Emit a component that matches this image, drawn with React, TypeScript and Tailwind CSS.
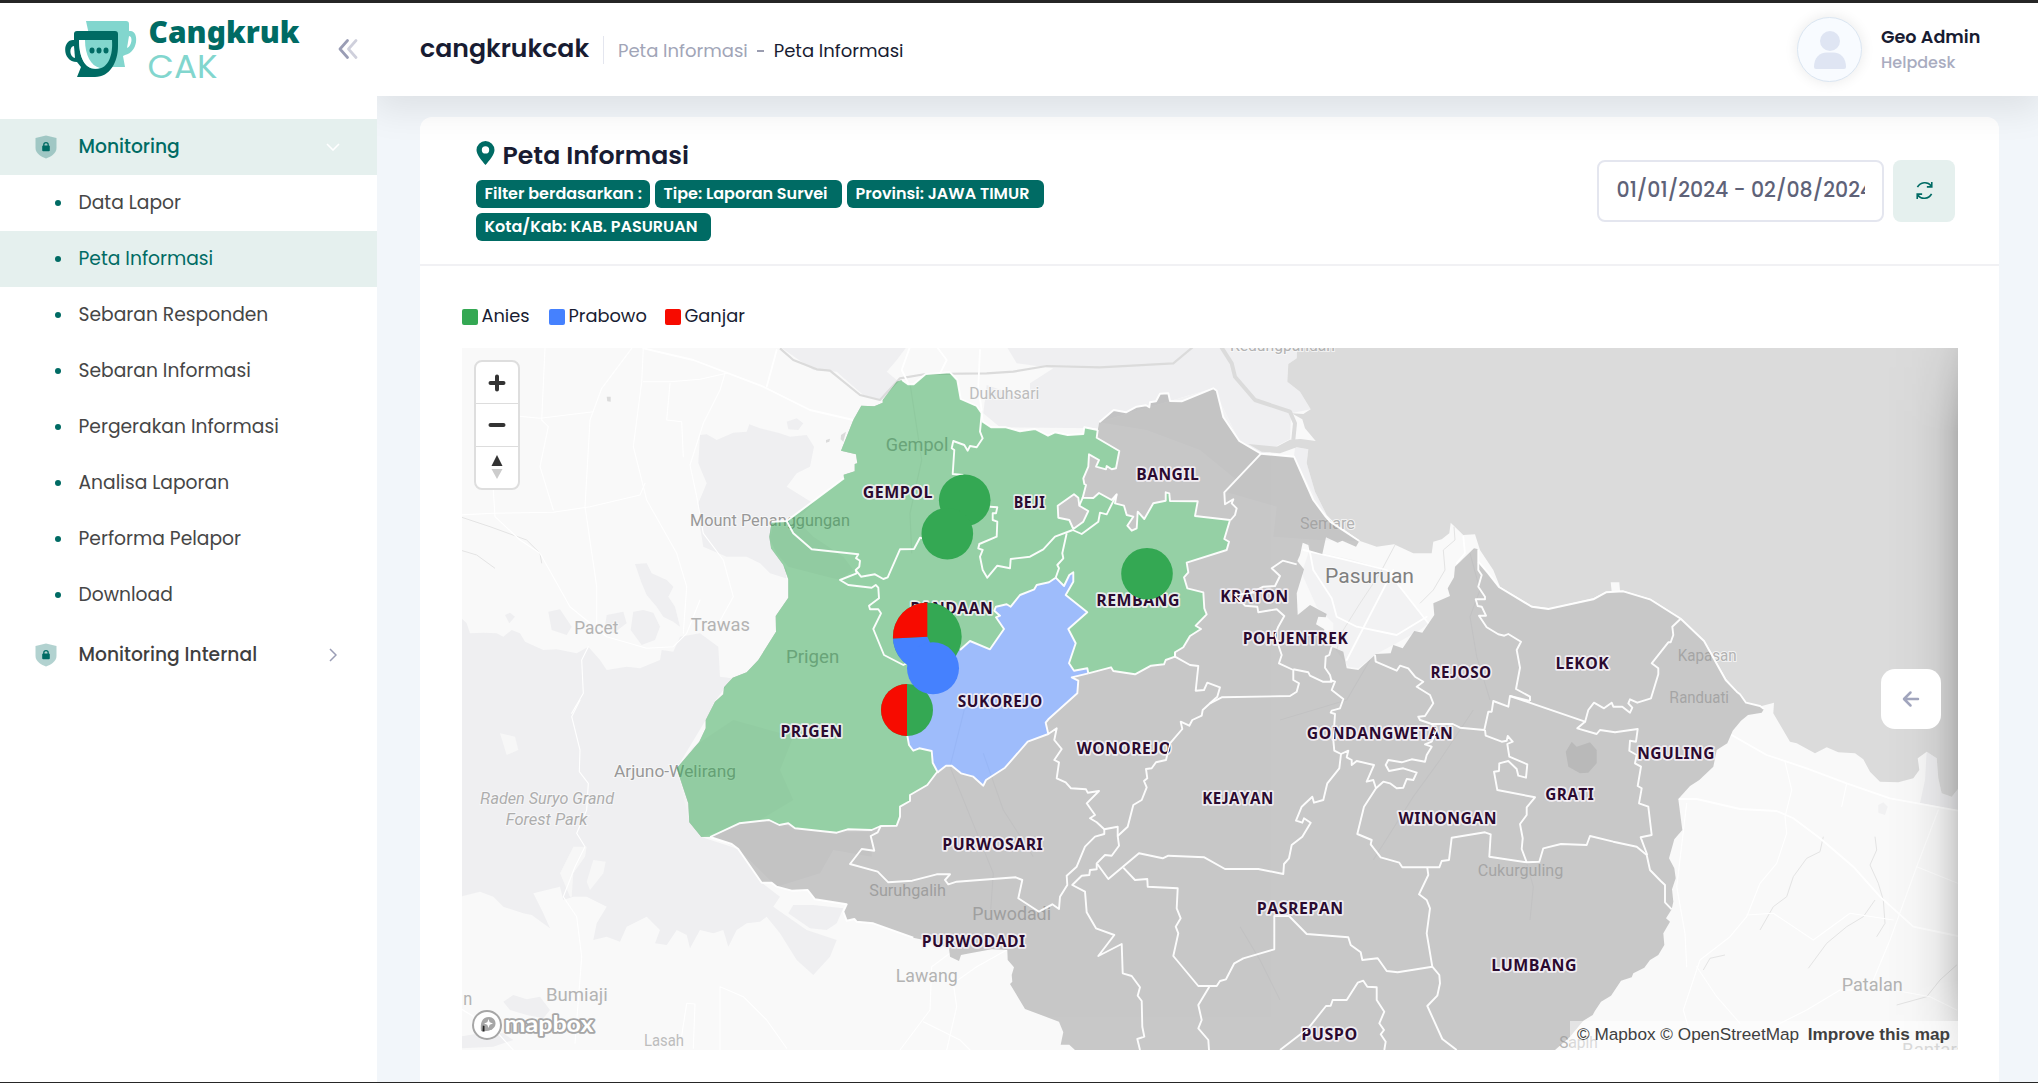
import React from "react";

type Pt = [number, number];

/* Survey tiles are digitised at three units per pixel from each tile's origin. */
const at = (ox: number, oy: number, data: string): Pt[] => {
  const n = data.trim().split(/\s+/).map(Number);
  const out: Pt[] = [];
  for (let i = 0; i < n.length; i += 2) out.push([ox + n[i] / 3, oy + n[i + 1] / 3]);
  return out;
};
const A = (d: string) => at(460, 340, d);
const B = (d: string) => at(800, 340, d);
const C = (d: string) => at(1180, 340, d);
const D = (d: string) => at(1560, 340, d);
const E = (d: string) => at(460, 700, d);
const F = (d: string) => at(860, 700, d);
const G = (d: string) => at(1240, 700, d);
const H = (d: string) => at(1540, 700, d);

const line = (...parts: Pt[][]) =>
  "M" + parts.flat().map((p) => p[0].toFixed(1) + " " + p[1].toFixed(1)).join("L");
const area = (...parts: Pt[][]) => line(...parts) + "Z";

const westCoast = [
  ...E("745 410 724 411 688 367 685 310 650 205 718 125 737 85 737 60 768 0"),
  ...A("738 1138 765 1085 790 1063 792 1042 818 1013 860 997 895 960 948 875 947 828 985 773 985 718 970 675 933 625 928 590 935 545 980 543 1152 415 1151 404 1184 394 1184 372 1192 370 1188 343 1143 332 1180 240 1204 197 1243 199 1268 188 1268 180 1310 125 1326 120 1344 133 1361 133 1397 102"),
  ...B("450 97 472 120 482 177 530 198 545 220 548 245 573 262 618 262 660 274 705 267 744 287 765 277 803 285 850 282 853 262 893 270"),
];
const bangilNorth = B("898 247 941 210 978 217 1010 200 1038 196 1048 202 1050 187 1068 184 1080 161 1105 160 1110 183 1145 184 1240 145 1250 152 1270 232 1318 303 1383 341");
const cityEdge = C("342 350 400 480 437 530 450 545 538 603 528 620 487 602 473 608 438 592 427 642 388 631 385 615 368 608 360 645 352 663 372 688 350 760 353 825 390 795 440 822 437 832 415 830 408 853 433 868 430 885 455 920 490 935 500 985 535 990 588 942 632 940 640 915 668 925 703 873 727 878 763 825 760 790 810 768 803 745 822 712 825 680 882 625 895 628");
const lekokCoast = [
  ...C("895 665 925 700 958 742 1055 800 1105 807 1240 778 1278 757 1330 754"),
  ...D("272 779 362 836 432 903 497 1020 530 1055 540 1063 558 1088 600 1098 612 1107"),
];
const eastEdge = H("665 38 624 45 603 62 578 92 562 130 530 150 520 200 478 240 450 258 415 297 427 390 403 418 387 475 403 505 407 535 396 568 400 605 395 628 378 655 390 665 370 700 373 735 355 765 330 780 313 803 280 820 275 832 243 842 213 887 183 905 165 932 158 945 130 962 90 1010 45 1050");
const southEdge = [
  ...F("645 1050 628 1034 602 1034 610 997 597 965 495 927 450 852 457 845 455 825 462 802 443 780 442 750 395 748 330 760 303 765 297 783 270 770 267 745 215 725 160 713"),
  ...E("1240 670 1190 665 1183 657 1160 662 1150 635 1160 613 1065 598 1043 570 995 572 950 560 935 548 905 548 835 447 815 432 750 411"),
];

const bejiEast = B("893 270 890 293 958 333 948 385 935 388 920 378 918 388 888 380 897 360 867 343 865 380 850 415 853 432 858 435 848 473 880 474 897 459 935 480 950 463 945 490");
const rembang = B("972 497 980 525 1000 530 982 557 995 572 1010 565 1013 515 1033 537 1060 490 1097 482 1097 457 1108 460 1110 483 1193 484 1185 528 1290 540 1273 597 1287 605 1280 630 1160 668 1165 697 1152 712 1162 745 1210 757 1213 805 1220 823 1187 857 1203 867 1170 888 1150 922 1125 937 1125 950 1097 960 1092 973 1053 977 1005 1003 940 993 933 982 865 1000");
const rembangWest = B("865 1000 862 985 822 992 807 970 827 910 805 867 862 817 797 765 820 725 820 697 808 705 792 738 767 713");
const sukorejoNorth = B("767 713 747 727 710 735 703 748 660 765 632 800 620 793 588 800 583 812 600 827 588 832 612 867 570 928 510 903 480 930");
const sukorejoWest: Pt[] = [[935, 665], [918, 690], ...F("142 107 147 135 160 152 178 145 215 153 218 188 233 217")];
const prigenSouth = E("1432 215 1402 255 1350 285 1350 303 1320 320 1320 350 1310 377 1262 378 1235 390 1163 388 1130 398 1005 385 985 370 958 375 927 360 838 370 750 411");
const sukorejoEast = B("865 1000 815 1012 835 1022 832 1060 745 1138");
const sukorejoSouth = F("557 68 565 102 503 125 435 203 378 240 370 257 340 230 303 220 275 197 258 197 233 217");
const enclave = B("822 463 835 473 838 497 865 513 850 545 820 567 808 540 775 533 773 497");

const regency = area(westCoast, bangilNorth, cityEdge, lekokCoast, eastEdge, southEdge);
const green = area(westCoast, bejiEast, rembang, rembangWest, sukorejoNorth, sukorejoWest, prigenSouth);
const blue = area(sukorejoNorth, sukorejoWest, [...sukorejoSouth].reverse(), [...sukorejoEast].reverse(), rembangWest);

const borders = [
  line(westCoast.slice(38)),
  line(A("935 545 980 543 1152 415")),
  line(bangilNorth, cityEdge.slice(0, 5)),
  line(lekokCoast),
  line(southEdge.slice(19)),
  line(bejiEast, rembang),
  line(rembangWest),
  line(sukorejoNorth),
  line(sukorejoWest, prigenSouth),
  line(sukorejoEast, sukorejoSouth),
  area(enclave),
  line(B("838 497 848 473")),
  line(B("950 463 920 523 900 518 895 545 845 582 818 570")),
  line(A("980 543 1000 580 1055 628 1195 643 1188 655 1200 662 1198 680 1187 690 1203 710 1245 703 1270 717 1283 712 1320 628 1362 627 1380 593 1395 597")),
  line(A("1187 690 1190 700 1140 720 1165 735 1235 743 1247 735 1255 743 1257 775 1227 797 1230 808 1255 808 1263 820 1240 867 1272 945 1330 975 1345 968")),
  line(B("545 220 540 275 548 295 530 322 510 318 503 332 493 315 460 303 455 325 463 330 458 402 490 405")),
  line(B("570 500 592 502 588 520 578 520 578 540 592 545 590 590 538 612 535 625 548 630 540 650 548 690 562 713 592 677 630 685 632 657 690 650 730 628 765 590 818 570")),
  line(B("800 580 787 640 790 655 772 675 777 685 767 713")),
  line(C("243 341 133 457 135 493 160 478 155 490 170 505 165 525 152 540")),
  line(C("350 673 308 662 275 685 300 708 285 738 250 740 210 760 165 765 195 797 232 800 235 817 290 808 313 828 295 860 285 885 300 930 305 945 297 970 340 990 340 1020 357 1030 350 1055 330 1068 125 1072 90 1090")),
  line(C("-15 937 -15 950 30 975 55 978 47 1052 72 1050 82 1028 120 1042 112 1070 90 1090"), F("1055 5 1028 30 1025 47 997 60 988 77 962 65 967 87 930 130 918 180 888 187 875 205 858 207 862 235 852 243 860 262 845 300 820 315 803 380 773 408")),
  line(C("455 920 448 945 437 950 435 983 450 1005 455 1025 428 1025 390 1007 385 997 340 988")),
  line(C("450 1020 465 1025 455 1050 490 1077 480 1105 455 1112"), G("272 38 285 42 280 120 283 152 303 162 298 205 262 250 250 300 222 308 217 290 185 320 168 362 187 368 192 355 212 368 187 410 155 435 147 475 132 492 130 522"), F("1195 507 1095 507 1033 472 925 467 908 475 837 460 745 537 712 492")),
  line(G("303 162 325 152 320 172 335 180 335 195 350 183 402 195 380 245 400 240 408 265 372 320 352 402 395 420 392 433 422 472 478 488 487 502 598 502 605 483 627 480 635 413 735 397 752 403 748 470 860 487 898 485 910 445 963 432 1040 435 1050 408 1120 425 1190 440 1220 465 1230 510"), H("362 543 375 555 375 607 395 628")),
  line(G("408 265 430 245 450 250 470 265 490 263 500 237 520 240 530 218 490 205 447 213 437 195 445 180 485 187 515 178 555 185 560 165 575 140 555 133 575 125 590 90 575 72 540 60 535 50 555 48 580 10"), C("750 1065 710 1040 730 1025 705 1010 685 985 660 977 650 992 587 965 585 945")),
  line(G("575 72 638 72 660 83 733 90 745 35 755 35"), C("940 1083 985 1100 990 1068 1050 1083")),
  line(C("895 628 895 690 905 705 895 740 915 770 915 778 887 778 893 798 905 800 918 827 897 827 920 862 955 883 973 887 985 882 1023 905 1010 930 1020 983 1008 1047 1050 1070 1050 1083")),
  line(C("990 1068"), G("1035 65 1012 85 1070 102 1080 90 1125 97"), H("293 87 288 125 270 122 268 152 290 165 285 190 303 200 293 258 305 265 297 310 325 320 335 405 302 412 322 465")),
  line(D("362 836 337 860 340 885 332 907 325 907 275 970 295 985 295 1003 273 1075 232 1088 210 1078 205 1090 217 1103 210 1118 187 1100 160 1100 155 1088 132 1105 102 1088 85 1110 75 1147")),
  line(G("735 90 737 107 785 125 800 122 803 108 818 125 802 132 808 170 862 193 858 233 835 227 830 207 805 183 778 190 777 213 762 215 772 270 885 292 860 322 860 345 840 372 848 415 845 447 860 487")),
  line(G("562 503 565 525 537 583 560 600 570 625 560 700 577 800 598 825 600 850 592 887 562 918 607 1017 650 1050")),
  line(G("577 800 473 817 440 813 413 775 367 780 362 757 332 735 325 712 200 702 147 648 103 648 103 748"), F("1150 775 1123 790 1098 838 1080 843 1070 858 1015 858 940 768 955 700 947 680 962 655 950 625 953 565 863 560 862 537 825 540 790 503")),
  line(F("1048 860 1015 915 1025 960 1015 985 1045 1020 1047 1050")),
  line(G("120 1050 205 985 258 918 272 917 278 900 320 900 353 848 370 842 382 860 410 862 410 900 433 935 418 970 432 990 422 1003 437 1025 433 1050")),
  line(F("565 102 590 85 583 120 605 147 583 180 597 187 590 235 617 247 633 265 678 268 683 278 717 273 680 310 705 345 690 355 710 367 733 388 773 380 773 408 777 437 755 467 735 465 710 490 710 508 690 510 688 525 665 527 637 555 675 575 680 637 708 685 763 705 715 768 785 732 788 820 815 828 840 862 833 887 845 903 847 980 853 1010 832 1017 840 1050")),
  line(F("733 388 733 402 705 410 675 440 650 500 620 527 622 555 600 590 597 627 577 613 537 635 475 595 487 540 467 532 290 545 265 553 255 540 270 523 230 523 157 542 85 547"), E("1253 515 1170 492 1205 447 1243 452 1232 408 1253 397 1262 378")),
];

const sea = area(
  C("352 20 350 55 325 72 322 125 360 155 392 208 370 222 335 220 367 238 375 265 407 303 362 297 330 299 290 320 205 312 245 335 300 340 350 322 385 328 380 370 405 455 440 525 460 545 540 603 590 620 642 613 700 640 755 640 760 605 785 598 808 580 812 548 850 585 885 583 900 630 940 690 960 740 1055 797 1110 805 1240 775 1278 755 1295 755 1292 727 1318 727 1320 752"),
  D("190 752 272 777 362 834 434 903 500 1020 530 1053 558 1088 605 1098 642 1088"),
  H("700 40 750 125 770 130 825 160 860 142 895 157 945 160 970 178 990 215 1020 245 1075 247 1120 235 1138 210 1133 175 1160 155 1190 175 1195 235 1205 280 1235 290 1260 260"),
  [[1960, 340]],
);
const marshes = [
  area(B("-60 20 40 90 110 95 190 165 240 180 290 120 260 95 290 60 320 20")),
  area(B("620 20 650 70 760 85 690 130 690 180 560 135 550 220 600 262 893 265 900 245 1240 145 1318 303 1383 341"), C("300 330 290 318 330 297 333 220 392 208 360 155 322 125 325 72 350 55 352 20")),
  area(C("345 322 385 328 380 370 405 455 440 525 400 480 342 350")),
  area(H("1140 310 1155 240 1160 155 1190 175 1195 235 1205 280 1235 290 1260 260 1260 332")),
];
const forests = [
  area(A("720 285 740 283 770 300 820 278 860 275 868 253 900 265 960 280 990 290 1040 285 1062 320 1050 380 1010 400 980 440 1060 490 1030 520 980 545 935 545 930 620 980 690 978 715 930 700 900 670 860 650 800 650 730 620 720 560 715 490 740 430 715 370")),
  area(A("980 245 1010 235 1030 250 1015 270 985 268")),
  area(A("525 672 560 670 575 700 620 720 640 740 625 770 645 800 660 860 640 845 610 830 590 800 560 765 545 730")),
  area(A("520 815 550 810 580 818 600 860 585 900 545 915 512 870")),
  area(A("440 825 490 815 500 850 460 880 435 860")),
  area(A("265 815 300 808 335 860 320 885 275 870")),
  area(A("135 825 150 818 165 830 148 850")),
  area(A("0 830 20 850 30 880 70 878 110 880 130 890 155 870 180 880 195 905 250 930 290 928 350 940 385 920 420 960 440 990 500 980 540 985 600 960 605 930 640 935 660 890 720 880 775 920 780 1010 815 1015"),
    E("768 0 737 60 650 205 685 310 688 367 724 411 835 447 905 548 960 590 940 620 1040 690 1130 720 1110 770 1060 825 1010 780 960 700 920 650 900 665 860 670 830 690 805 740 790 690 760 700 720 690 690 745 680 705 650 690 620 735 585 730 600 690 560 650 500 680 480 725 440 710 400 720 410 670 440 620 380 590 340 590 310 600 300 560 220 580 250 640 270 685 215 645 190 640 130 620 100 590 60 575 0 590")),
  area(E("985 640 1000 615 1060 615 1150 625 1130 670 1100 690 1050 685")),
  area(E("130 905 160 885 200 898 240 890 270 930 250 955 200 945 150 930")),
  area(E("0 1010 60 1000 130 1000 160 1020 100 1040 0 1045")),
];
const clearings = [
  area(E("330 590 300 520 340 440 380 440 375 470 340 520 335 590")),
  area(E("120 100 165 110 175 150 140 165")),
  area(E("400 480 437 485 430 520 390 570 380 545")),
];
const roads = [
  line(A("515 25 425 145 390 240 375 500 410 740 410 860")),
  line(A("550 25 545 125 520 320 560 480 650 640 680 740 670 880")),
  line(A("795 100 780 150 730 250 690 375 710 470 730 580 790 660 820 770 770 860")),
  line(A("0 525 100 520 280 517 390 500 540 465 555 430")),
  line(A("100 450 105 530 180 600 240 640 330 800 440 890 560 925 640 920 680 880 720 780")),
  line(A("400 215 240 235 140 225")),
  line(A("255 25 245 240 265 260 240 380 280 510")),
  line(A("550 125 630 125 720 118 800 100")),
  line(A("630 130 620 240 665 245 670 350")),
  line(A("385 920 365 960 370 1060 335 1120")),
  line(E("360 0 335 50 360 150 358 215 385 250 380 330 350 400 375 440 345 500 310 590 350 650 365 770 345 1030")),
  line(E("780 1050 780 860 850 890 920 960 980 1045")),
  line(E("660 1040 680 910 705 912 700 1045")),
  line(E("0 925 100 985 160 1050")),
  line(F("440 750 350 800 280 850 290 920 260 1050")),
  line(F("120 1050 210 930 215 800 270 760")),
  line(F("190 965 300 1020 330 1050")),
  line(H("735 185 755 270 735 350 740 400 710 490 660 550 620 650 570 710 480 780 430 930 450 1000")),
  line(H("1195 330 1130 500 1050 720 1000 840")),
  line(H("700 980 800 930 900 870 1060 870 1170 890 1250 930")),
  line(H("470 800 530 890 600 970")),
  line(H("440 310 410 560 435 700 440 800")),
  line(H("620 645 700 640 820 720 930 640 1060 660")),
  line(H("1130 500 1253 550")),
  line(H("905 320 920 250")),
];
const highways = [
  line(A("550 25 700 60 910 140 1050 210 1180 240")),
  line(B("330 20 305 90 325 130")),
  line(A("950 30 920 140")),
  line(B("410 20 440 60 420 100")),
  line(B("540 30 535 140 545 210")),
  line(H("575 105 680 165 800 205 920 250 1050 295 1253 332")),
  line(H("415 297 470 297 600 327 710 333 760 355 840 415 940 500 1020 590 1120 680 1253 708")),
  line(C("385 610 400 690 455 775 470 830 530 860 650 885 740 830")),
  line(C("370 630 480 655 620 690 745 850")),
  line(C("850 590 855 640 830 670")),
  line(C("640 690 500 960")),
];
const streams = [
  line(A("0 530 90 560 200 600 240 640 245 670")),
  line(A("0 630 50 645 105 685")),
  line(H("850 410 840 455 800 475 760 530 740 590 700 620 660 690")),
  line(H("1005 410 1010 450 990 495 1015 550 1030 600 1035 670 1010 710")),
  line(H("1005 600 970 650 920 680 860 730 805 805")),
  line(H("1250 795 1200 840 1160 890 1070 915")),
  line(H("490 810 510 775 555 765")),
  line(C("645 615 600 700 540 790 490 870 470 930")),
  line(C("822 560 825 600 790 630 795 690 760 750 720 790")),
];
const insideStreams = [
  line(B("330 130 365 360 330 520 335 640")),
  line(C("870 640 900 750 870 830 890 950 930 1080")),
  line(C("300 1140 500 1080 570 960")),
  line(F("320 0 270 200 400 520 390 660")),
  line(F("370 160 430 330 520 470")),
  line(G("700 30 600 180 520 290 400 480")),
  line(G("860 490 880 560 870 660")),
  line(G("0 680 60 780 120 900")),
];

type Label = [string, number, number, number, number, string];
const places: Label[] = [
  ["Gempol", 885.7, 948.3, 450.7, 19, "#a0a0a0"],
  ["Mount Penanggungan", 690, 850, 525.7, 17, "#989898"],
  ["Dukuhsari", 969.3, 1039.3, 399.3, 17, "#bdbdbd"],
  ["Pacet", 574.3, 618.3, 634, 18, "#b3b3b3"],
  ["Trawas", 690.7, 750, 630.7, 18, "#b3b3b3"],
  ["Prigen", 786, 839.3, 663.3, 18, "#a0a0a0"],
  ["Arjuno-Welirang", 614, 736, 776.7, 17, "#989898"],
  ["Bumiaji", 546, 607.7, 1001, 18, "#b3b3b3"],
  ["Lasah", 644, 684, 1045.7, 16, "#bdbdbd"],
  ["n", 463.3, 472.3, 1005, 18, "#b3b3b3"],
  ["Suruhgalih", 869.3, 946, 895.7, 16, "#a8a8a8"],
  ["Puwodadi", 972.3, 1051, 920, 18, "#a8a8a8"],
  ["Lawang", 895.7, 957.7, 981.7, 18, "#b3b3b3"],
  ["Cukurguling", 1477.7, 1563.3, 876.3, 16, "#b3b3b3"],
  ["Sapih", 1559.3, 1597.7, 1048.3, 16, "#b3b3b3"],
  ["Patalan", 1841.7, 1902.7, 991, 18, "#b3b3b3"],
  ["Bantaran", 1902, 1977, 1056, 18, "#b3b3b3"],
  ["Semare", 1300, 1354.7, 529, 16, "#b3b3b3"],
  ["Pasuruan", 1325, 1414, 583.3, 21, "#808080"],
  ["Kapasan", 1677.7, 1736.7, 660.7, 16, "#b3b3b3"],
  ["Randuati", 1669.3, 1729, 703.3, 16, "#b3b3b3"],
  ["Kedungpandan", 1230, 1335, 350.7, 16, "#b3b3b3"],
];
const districts: [string, number, number, number][] = [
  ["GEMPOL", 863.3, 932, 498.3],
  ["BEJI", 1014.3, 1044.3, 507.7],
  ["BANGIL", 1136.7, 1198.3, 480],
  ["PANDAAN", 910.7, 992.3, 614],
  ["REMBANG", 1096.7, 1179, 606.3],
  ["KRATON", 1220.7, 1287.7, 601.7],
  ["POHJENTREK", 1243.3, 1347.3, 644],
  ["REJOSO", 1431, 1490.7, 677.7],
  ["LEKOK", 1556, 1608.3, 669],
  ["SUKOREJO", 958.3, 1041.7, 707],
  ["PRIGEN", 781, 841.7, 736.7],
  ["WONOREJO", 1077.3, 1170.7, 753.7],
  ["KEJAYAN", 1202.7, 1272.7, 803.7],
  ["PURWOSARI", 942.7, 1042.3, 849.7],
  ["PURWODADI", 922.3, 1024.7, 947.3],
  ["GONDANGWETAN", 1307.3, 1452.3, 739],
  ["WINONGAN", 1399, 1496, 823.7],
  ["GRATI", 1545.7, 1593.3, 800.3],
  ["NGULING", 1637.7, 1714, 758.7],
  ["PASREPAN", 1257.3, 1342.7, 913.7],
  ["LUMBANG", 1491.7, 1576, 971.3],
  ["PUSPO", 1301.7, 1356.7, 1040.3],
];
const crossed = ["KRATON", "POHJENTREK", "WONOREJO", "GONDANGWETAN", "NGULING", "PURWODADI", "PUSPO"];

function MapCanvas() {
  return (
    <svg viewBox="462 348 1496 702" className="block h-[702px] w-[1496px]">
      <defs>
        <linearGradient id="edge" x1="0" x2="1" y1="0" y2="0">
          <stop offset="0" stopColor="#000" stopOpacity="0" />
          <stop offset="0.4" stopColor="#000" stopOpacity="0.015" />
          <stop offset="0.7" stopColor="#000" stopOpacity="0.055" />
          <stop offset="0.88" stopColor="#000" stopOpacity="0.12" />
          <stop offset="1" stopColor="#000" stopOpacity="0.19" />
        </linearGradient>
        <linearGradient id="edgeFade" x1="0" x2="0" y1="0" y2="1">
          <stop offset="0" stopColor="#fff" stopOpacity="0.35" />
          <stop offset="0.12" stopColor="#fff" stopOpacity="1" />
          <stop offset="0.9" stopColor="#fff" stopOpacity="1" />
          <stop offset="1" stopColor="#fff" stopOpacity="0.5" />
        </linearGradient>
        <mask id="edgeMask">
          <rect x="1885" y="348" width="73" height="702" fill="url(#edgeFade)" />
        </mask>
        <clipPath id="crossings">
          {districts.filter(([name]) => crossed.includes(name)).map(([name, x1, x2, y]) => (
            <rect key={name} x={x1} y={y - 11.5} width={x2 - x1} height="12" />
          ))}
        </clipPath>
      </defs>
      <rect x="462" y="348" width="1496" height="702" fill="#f9f9f9" />
      {marshes.map((d, i) => <path key={i} d={d} fill="#efeff1" />)}
      {forests.map((d, i) => <path key={i} d={d} fill="#efeff1" />)}
      {clearings.map((d, i) => <path key={i} d={d} fill="#f7f7f7" />)}
      <path d={sea} fill="#dbdbdb" />
      <path d={area(C("388 631 520 660 620 690 660 740 745 850 720 870 640 915 588 942 535 985 505 980 460 920 460 850 410 800 365 700"))} fill="#f2f2f3" />
      <g fill="none" stroke="#dbdbdb" strokeLinejoin="round">
        <path d={line(A("960 25 1000 60 1070 88 1110 92 1200 165 1260 180 1320 115 1397 102"), B("560 100 640 95 740 78 900 82 1120 70 1180 20"))} strokeWidth="2.2" />
        <path d={line(C("120 15 155 70 165 110 225 180 330 215 345 250 340 300"))} strokeWidth="4" />
        {streams.map((d, i) => <path key={i} d={d} stroke="#e4e4e4" strokeWidth="1" />)}
      </g>
      <g fill="none" stroke="#fff" strokeLinejoin="round" strokeLinecap="round">
        {roads.map((d, i) => <path key={i} d={d} strokeWidth="1.1" />)}
        {highways.map((d, i) => <path key={i} d={d} strokeWidth="1.8" />)}
      </g>
      <path d={area(A("440 170 452 170 452 185 442 184"))} fill="#dbdbdb" />
      <path d={area(A("1098 300 1110 296 1108 305 1098 308"))} fill="#dbdbdb" />
      <path d={area(A("1143 285 1158 275 1150 305 1142 298"))} fill="#dbdbdb" />
      <path d={area(H("1015 315 1030 307 1043 320 1035 345 1015 338"))} fill="#f1f1f2" />
      <path d={area(G("977 155 995 125 1010 140 1050 127 1070 150 1070 190 1045 218 1020 220 985 200"))} fill="#dbdbdb" />
      <path d={area(A("1010 540 1060 590 1150 650 1180 690 1140 720 1060 700 985 680 950 640 930 600 940 550"))} fill="#f0f0f1" />
      <path d={area(E("1000 110 960 210 1000 300 900 360 720 411 688 367 650 205 700 140 820 60"))} fill="#f2f2f3" />
      <path d={area(E("838 370 930 360 1000 385 1130 398 1235 395 1235 470 1120 450 1080 520 950 560 835 447 760 411"))} fill="#f0f0f1" />
      <path d={area(B("898 247 1240 145 1318 303 1383 341 1310 420 1200 330 1040 270"))} fill="#f2f2f3" />
      <path d={area(C("243 341 342 350 437 530 538 603 420 600 280 590 290 500 140 457"))} fill="#f2f2f3" />
      <g fill="none" stroke="#ededee" strokeWidth="1.2">
        {insideStreams.map((d, i) => <path key={i} d={d} />)}
      </g>
      <g fontFamily="Roboto, 'Noto Sans', sans-serif" stroke="#f9f9f9" strokeOpacity="0.8" strokeWidth="2" paintOrder="stroke">
        {places.map(([name, x1, x2, y, size, fill]) => (
          <text key={name} x={x1} y={y} fontSize={size} fill={fill} textLength={x2 - x1} lengthAdjust="spacingAndGlyphs">{name}</text>
        ))}
        <g fontStyle="italic" fill="#adadad" fontSize="17">
          <text x="480" y="804.3" textLength="134" lengthAdjust="spacingAndGlyphs">Raden Suryo Grand</text>
          <text x="505.7" y="825" textLength="81.6" lengthAdjust="spacingAndGlyphs">Forest Park</text>
        </g>
      </g>
      <g opacity="0.5">
        <path d={regency} fill="#979797" />
        <path d={green} fill="#34a853" />
        <path d={blue} fill="#4581fe" />
        <path d={area(enclave)} fill="#979797" />
      </g>
      <g fill="none" stroke="#fff" strokeOpacity="0.95" strokeWidth="1.9" strokeLinejoin="round">
        {borders.map((d, i) => <path key={i} d={d} />)}
      </g>
      <g fontFamily="'Open Sans', 'Noto Sans', sans-serif" fontWeight="700" fontSize="15.400" letterSpacing="0.5" fill="#2b0a30" stroke="#f6f2f7" strokeOpacity="0.9" strokeWidth="3.400" strokeLinejoin="round" paintOrder="stroke">
        {districts.map(([name, x1, x2, y]) => (
          <text key={name} x={x1 - 0.5} y={y} textLength={x2 - x1 + 1.5} lengthAdjust="spacingAndGlyphs">{name}</text>
        ))}
      </g>
      <g fill="none" stroke="#fff" strokeWidth="1.500" clipPath="url(#crossings)">
        {borders.map((d, i) => <path key={i} d={d} />)}
      </g>
      <g>
        <circle cx="964.7" cy="500.3" r="25.8" fill="#34a853" />
        <circle cx="947.3" cy="533.7" r="25.8" fill="#34a853" />
        <circle cx="1147" cy="573.7" r="25.8" fill="#34a853" />
        <circle cx="907" cy="710" r="26" fill="#34a853" />
        <path d="M907 684a26 26 0 0 0 0 52z" fill="#f70b00" />
        <circle cx="927.3" cy="636.8" r="34.4" fill="#34a853" />
        <path d="M927.3 636.8L892.9 638.4A34.4 34.4 0 0 0 942 668z" fill="#4581fe" />
        <path d="M927.3 636.8V602.4A34.4 34.4 0 0 0 892.9 638.4z" fill="#f70b00" />
        <circle cx="933" cy="668.3" r="26" fill="#4581fe" />
      </g>
      <rect x="1885" y="348" width="73" height="702" fill="url(#edge)" mask="url(#edgeMask)" />
    </svg>
  );
}

function MapboxLogo() {
  return (
    <svg viewBox="0 0 126 34" className="h-[34px] w-[126px]">
      <circle cx="17" cy="17" r="14" fill="#fff" stroke="#a6a6a6" strokeWidth="2" />
      <path d="M11 23c-1-8 1-14 8-14 4 0 6.500 3 6.500 6.500C25.500 21 19 24 11 23z" fill="#a6a6a6" />
      <path d="M18.500 11l1.200 3.300 3.300 1.200-3.300 1.200-1.200 3.300-1.200-3.300-3.300-1.200 3.300-1.200z" fill="#fff" />
      <path d="M12.500 23.500l.3-6 1.700.5v5.500z" fill="#222" />
      <text x="34.500" y="24" fontFamily="Lato, sans-serif" fontWeight="700" fontSize="23" fill="#fff" stroke="#a6a6a6" strokeWidth="3.600" strokeLinejoin="round" paintOrder="stroke" textLength="89" lengthAdjust="spacingAndGlyphs">mapbox</text>
    </svg>
  );
}

function Logo() {
  return (
    <svg viewBox="64 16 240 66" className="h-[66px] w-[240px]">
      <path d="M86 21h40q3 0 3 3v7h1c9-1 9 21-5 24l-2 1 2 11H96z" fill="#82d6ce" />
      <path d="M129 36c4 0 3 10-2 12z" fill="#fff" />
      <path d="M77 31h38q3 0 3 3v12c0 16-8 31-23 31H77l4-10-4-5c-15 0-15-22-4-22h1v-6q0-3 3-3z" fill="#006b64" />
      <path d="M74 46c-5 0-5 11 1 12z" fill="#fff" />
      <path d="M79 40h33c1 14-3 29-16 29S79 54 79 40z" fill="#82d6ce" />
      <path d="M79 40h6c0 15 6 26 15 28-14 4-21-9-21-28z" fill="#fff" />
      <g fill="#006b64"><ellipse cx="92" cy="50.500" rx="2.500" ry="3" /><ellipse cx="99" cy="50.500" rx="2.500" ry="3" /><ellipse cx="106" cy="50.500" rx="2.500" ry="3" /></g>
      <text x="148.500" y="43" fontFamily="'Noto Sans', sans-serif" fontWeight="900" fontSize="30" fill="#006b64" textLength="151" lengthAdjust="spacingAndGlyphs">Cangkruk</text>
      <text x="147.500" y="78" fontFamily="Poppins, Lato, sans-serif" fontWeight="400" fontSize="32" fill="#82d6ce" textLength="70" lengthAdjust="spacingAndGlyphs">CAK</text>
    </svg>
  );
}

function ShieldLock() {
  return (
    <svg viewBox="0 0 22 24" className="h-6 w-[22px]">
      <path d="M11 0.500L21.500 3v10c0 5.500-6 9-10.500 10.500C6.500 22 .5 18.500.5 13V3z" fill="#006b64" fillOpacity="0.3" />
      <rect x="7.200" y="10.500" width="7.600" height="5.800" rx="1" fill="#006b64" />
      <path d="M8.800 11V9.800a2.200 2.200 0 0 1 4.400 0V11" fill="none" stroke="#006b64" strokeWidth="1.300" />
    </svg>
  );
}

const items = [
  "Data Lapor",
  "Peta Informasi",
  "Sebaran Responden",
  "Sebaran Informasi",
  "Pergerakan Informasi",
  "Analisa Laporan",
  "Performa Pelapor",
  "Download",
];

function Sidebar() {
  return (
    <aside className="z-20 flex w-[377px] shrink-0 flex-col bg-white">
      <div className="flex h-[116px] items-start justify-between pt-[13px] pr-[19px] pl-16">
        <Logo />
        <svg viewBox="0 0 20 20" className="mt-[23px] h-5 w-5" fill="none" strokeWidth="2.700" strokeLinecap="round" strokeLinejoin="round">
          <path d="M9.500 1.500L2 10l7.500 8.500" stroke="#9a9db5" />
          <path d="M18 1.500L10.500 10l7.500 8.500" stroke="#cfd0dc" />
        </svg>
      </div>
      <nav className="flex flex-col">
        <div className="flex h-14 items-center bg-[#e5f0ee] pl-[35px] pr-[37px] text-[18.700px] font-medium text-[#006b64]">
          <ShieldLock />
          <span className="ml-[21.500px] flex-1 leading-7">Monitoring</span>
          <svg viewBox="0 0 14 8" className="h-2 w-[14px]" fill="none" stroke="#fff" strokeWidth="1.600"><path d="M1 1l6 6 6-6" /></svg>
        </div>
        {items.map((name) => (
          <div key={name} className={"flex h-14 items-center pl-[55px] text-[18.700px] " + (name === "Peta Informasi" ? "bg-[#e5f0ee] text-[#006b64]" : "text-[#464646]")}>
            <span className="h-[6px] w-[6px] rounded-full bg-[#006b64]" />
            <span className="ml-[17.500px] -mt-px leading-7">{name}</span>
          </div>
        ))}
        <div className="mt-1 flex h-14 items-center pl-[35px] pr-[37px] text-[18.700px] font-medium text-[#3f3f3f]">
          <ShieldLock />
          <span className="ml-[21.500px] flex-1 leading-7">Monitoring Internal</span>
          <svg viewBox="0 0 8 14" className="mr-[3px] h-[14px] w-2" fill="none" stroke="#9a9db5" strokeWidth="1.500"><path d="M1 1l6 6-6 6" /></svg>
        </div>
      </nav>
    </aside>
  );
}

function Header() {
  return (
    <header className="z-10 flex h-[93px] shrink-0 items-center bg-white pl-[43px] pr-[58px] shadow-[0_10px_36px_4px_rgba(0,0,0,0.085)]">
      <h1 className="-mt-px w-[169px] text-[25.200px] font-semibold leading-8 text-[#181c32]">cangkrukcak</h1>
      <span className="ml-[14px] h-7 w-px bg-[#e4e6ef]" />
      <div className="ml-[14px] mt-[2px] flex items-center gap-[9.500px] text-[18px] leading-7">
        <span className="text-[#a1a5b7]">Peta Informasi</span>
        <span className="h-[2px] w-[7px] bg-[#9a9db0]" />
        <span className="text-[#181c32]">Peta Informasi</span>
      </div>
      <div className="ml-auto flex items-center gap-[19px]">
        <div className="flex h-[65px] w-[65px] items-center justify-center rounded-full border border-[#dbe6f2] bg-[#f8fbff] shadow-[0_0_14px_rgba(0,0,0,0.09)]">
          <svg viewBox="0 0 34 40" className="h-10 w-[34px]" fill="#dfe5f3">
            <circle cx="17" cy="11" r="10" />
            <path d="M1 37c0-9 5-14.500 13-14.500h6c8 0 13 5.500 13 14.500q0 2-2 2H3q-2 0-2-2z" />
          </svg>
        </div>
        <div className="mt-px w-[99px]">
          <div className="whitespace-nowrap text-[17.600px] font-semibold leading-[25px] text-[#181c32]">Geo Admin</div>
          <div className="text-[16px] font-medium leading-[25px] text-[#a9acc0]">Helpdesk</div>
        </div>
      </div>
    </header>
  );
}

const badge = "flex h-7 items-center whitespace-nowrap rounded-md bg-[#006b64] pb-px pl-[9px] text-[16px] font-semibold text-white";

function Legend({ color, label, width }: { color: string; label: string; width: string }) {
  return (
    <div className={"flex items-center gap-1 " + width}>
      <span className={"h-4 w-4 rounded-[2px] " + color} />
      <span>{label}</span>
    </div>
  );
}

export default function App() {
  return (
    <div className="flex h-[1083px] w-[2038px] flex-col overflow-hidden border-t-[3px] border-b border-[#262626] bg-[#f2f6fa] font-['Poppins','Inter',sans-serif] [font-feature-settings:'cv11','ss03']">
      <div className="flex min-h-0 flex-1">
        <Sidebar />
        <div className="flex min-w-0 flex-1 flex-col">
          <Header />
          <main className="ml-[43px] mt-[21px] flex w-[1579px] flex-1 flex-col rounded-t-xl bg-white">
            <div className="flex h-[149px] shrink-0 items-center justify-between border-b-2 border-[#f1f1f4] pl-[55.500px] pr-11">
              <div className="-mt-[6px] w-[640px]">
                <h2 className="flex h-[42px] items-center pt-px text-[25.200px] font-semibold text-[#181c32]">
                  <svg viewBox="0 0 18 24" className="mr-[8px] -mt-[6px] h-6 w-[19px]" fill="#006b64" fillRule="evenodd">
                    <path d="M9 0a9 9 0 0 1 9 9c0 4.500-5.500 11-9 15C5.500 20 0 13.500 0 9a9 9 0 0 1 9-9zm0 5.200a3.700 3.700 0 1 0 0 7.400 3.700 3.700 0 0 0 0-7.400z" />
                  </svg>
                  Peta Informasi
                </h2>
                <div className="mt-1 flex flex-wrap gap-x-[5px] gap-y-[5px]">
                  <span className={badge + " w-[174px]"}>Filter berdasarkan :</span>
                  <span className={badge + " w-[187px]"}>Tipe: Laporan Survei</span>
                  <span className={badge + " w-[197px]"}>Provinsi: JAWA TIMUR</span>
                  <span className={badge + " w-[235px]"}>Kota/Kab: KAB. PASURUAN</span>
                </div>
              </div>
              <div className="flex gap-[9px]">
                <div className="flex h-[62px] w-[287px] items-center rounded-lg border-2 border-[#e4e6ef] px-[17.500px]">
                  <span className="overflow-hidden whitespace-nowrap text-[20.500px] font-medium text-[#5e6278]">01/01/2024 - 02/08/2024</span>
                </div>
                <div className="flex h-[62px] w-[62px] items-center justify-center rounded-lg bg-[#e5f0ee]">
                  <svg viewBox="0 0 18 20" className="h-[19px] w-[17px]" fill="none" stroke="#006b64" strokeWidth="1.700">
                    <path d="M1.500 6.500C4.500.8 12.500.2 16 5M16.700 1v5.200h-5.200M16.500 13.500c-3 5.700-11 6.300-14.500 1.500M1.300 19v-5.200h5.200" />
                  </svg>
                </div>
              </div>
            </div>
            <div className="flex h-[82px] shrink-0 items-center pl-[41.500px] pt-[19px] text-[17.800px] text-[#181c32]">
              <Legend color="bg-[#34a853]" label="Anies" width="w-[87px]" />
              <Legend color="bg-[#4581fe]" label="Prabowo" width="w-[116px]" />
              <Legend color="bg-[#f70b00]" label="Ganjar" width="w-[90px]" />
            </div>
            <div className="relative ml-[42px] h-[702px] w-[1496px] shrink-0 overflow-hidden">
              <MapCanvas />
              <div className="absolute left-[12px] top-[12px] flex h-[130px] w-[46px] flex-col divide-y divide-[#ddd] overflow-hidden rounded-lg border-[2.500px] border-[#dedede] bg-white">
                <div className="flex flex-1 items-center justify-center">
                  <svg viewBox="0 0 18 18" className="h-[18px] w-[18px]" stroke="#333" strokeWidth="4" strokeLinecap="round"><path d="M2.500 9h13M9 2.500v13" /></svg>
                </div>
                <div className="flex flex-1 items-center justify-center">
                  <svg viewBox="0 0 18 18" className="h-[18px] w-[18px]" stroke="#333" strokeWidth="4" strokeLinecap="round"><path d="M2.500 9h13" /></svg>
                </div>
                <div className="flex flex-1 items-center justify-center">
                  <svg viewBox="0 0 12 24" className="h-6 w-3"><path d="M.5 11L6 0l5.500 11z" fill="#333" /><path d="M.5 14h11L6 24z" fill="#ccc" /></svg>
                </div>
              </div>
              <div className="absolute bottom-[8px] left-[8px]"><MapboxLogo /></div>
              <div className="absolute right-[17px] top-[321px] flex h-[60px] w-[60px] items-center justify-center rounded-[14px] bg-white">
                <svg viewBox="0 0 18 18" className="h-[18px] w-[18px]" fill="none" stroke="#a1a5bd" strokeWidth="2.500" strokeLinecap="round" strokeLinejoin="round"><path d="M16 9H2.500M8.500 2.500L2 9l6.500 6.500" /></svg>
              </div>
              <div className="absolute bottom-0 right-0 flex h-[29px] w-[388px] items-center justify-between whitespace-nowrap bg-white/50 pb-px pl-[7px] pr-2 font-['Liberation_Sans',sans-serif] text-[17.200px] text-[#404040]">
                <span>© Mapbox © OpenStreetMap</span>
                <span className="font-bold">Improve this map</span>
              </div>
            </div>
          </main>
        </div>
      </div>
    </div>
  );
}
